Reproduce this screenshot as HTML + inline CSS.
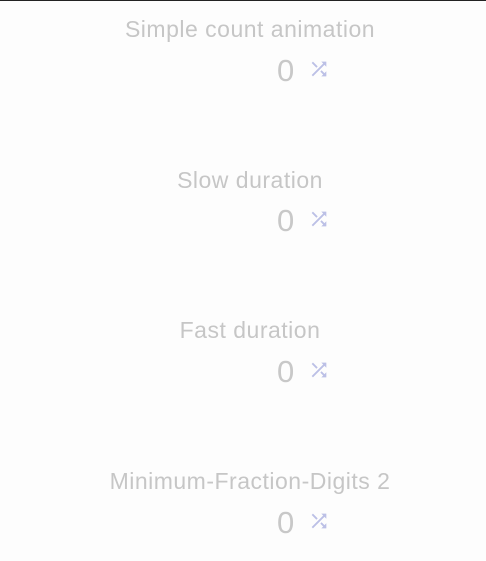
<!DOCTYPE html>
<html><head><style>
html,body{margin:0;padding:0;background:#fdfdfd;width:486px;height:561px;overflow:hidden;font-family:"Liberation Sans",sans-serif;}
.top{position:absolute;left:0;top:0;width:486px;height:1px;background:#222;}
.t{position:absolute;left:7px;width:486px;text-align:center;color:#c6c6c6;font-size:23px;letter-spacing:0.5px;}
.z{position:absolute;left:277px;color:#c8c8c8;font-size:31px;line-height:1;}
.i{position:absolute;left:308px;width:22px;height:22px;}
</style></head><body>
<div class="top"></div>
<div class="t" style="top:16px">Simple count animation</div>
<div class="z" style="top:55px">0</div>
<svg class="i" style="top:58px" viewBox="0 0 24 24" fill="#bcc0e6"><path d="M10.59 9.17L5.41 4 4 5.41l5.17 5.17 1.42-1.41zM14.5 4l2.04 2.04L4 18.59 5.41 20 17.960 7.46 20 9.5V4h-5.5zm.33 9.41l-1.41 1.41 3.13 3.13L14.5 20H20v-5.5l-2.04 2.04-3.13-3.13z"/></svg>
<div class="t" style="top:167px">Slow duration</div>
<div class="z" style="top:205px">0</div>
<svg class="i" style="top:208px" viewBox="0 0 24 24" fill="#bcc0e6"><path d="M10.59 9.17L5.41 4 4 5.41l5.17 5.17 1.42-1.41zM14.5 4l2.04 2.04L4 18.59 5.41 20 17.96 7.46 20 9.5V4h-5.5zm.33 9.41l-1.41 1.41 3.13 3.13L14.5 20H20v-5.5l-2.04 2.04-3.13-3.13z"/></svg>
<div class="t" style="top:317px">Fast duration</div>
<div class="z" style="top:356px">0</div>
<svg class="i" style="top:359px" viewBox="0 0 24 24" fill="#bcc0e6"><path d="M10.59 9.17L5.41 4 4 5.41l5.17 5.17 1.42-1.41zM14.5 4l2.04 2.04L4 18.59 5.41 20 17.96 7.46 20 9.5V4h-5.5zm.33 9.41l-1.41 1.41 3.13 3.13L14.5 20H20v-5.5l-2.04 2.04-3.13-3.13z"/></svg>
<div class="t" style="top:468px">Minimum-Fraction-Digits 2</div>
<div class="z" style="top:507px">0</div>
<svg class="i" style="top:510px" viewBox="0 0 24 24" fill="#bcc0e6"><path d="M10.59 9.17L5.41 4 4 5.41l5.17 5.17 1.42-1.41zM14.5 4l2.04 2.04L4 18.59 5.41 20 17.96 7.46 20 9.5V4h-5.5zm.33 9.41l-1.41 1.41 3.13 3.13L14.5 20H20v-5.5l-2.04 2.04-3.13-3.13z"/></svg>
</body></html>
